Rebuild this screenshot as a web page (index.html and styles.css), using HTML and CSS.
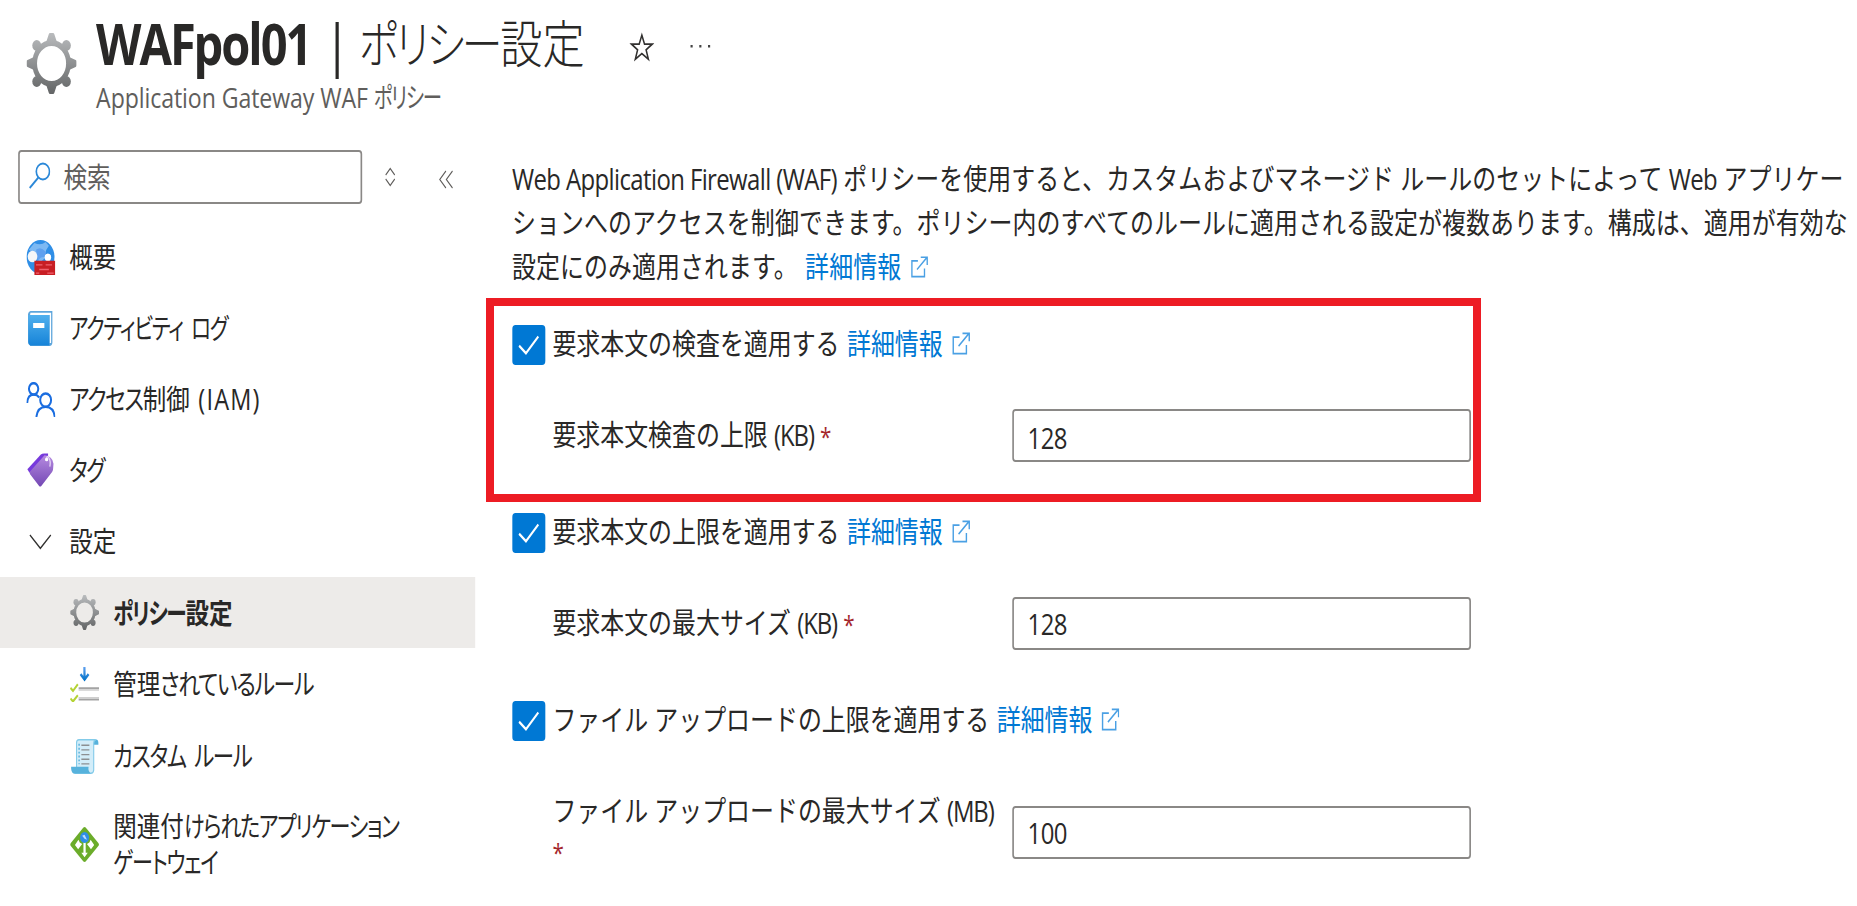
FILE: index.html
```html
<!DOCTYPE html>
<html lang="ja">
<head>
<meta charset="utf-8">
<title>WAFpol01 | ポリシー設定</title>
<link rel="stylesheet" href="styles.css">
</head>
<body>
<svg class="defs" width="0" height="0" aria-hidden="true">
  <defs>
    <linearGradient id="gGear" gradientUnits="userSpaceOnUse" x1="0" y1="0" x2="0" y2="18"><stop offset="0" stop-color="#b9bbbd"/><stop offset="1" stop-color="#636566"/></linearGradient>
    <linearGradient id="gBook" x1="0" y1="0" x2="0" y2="1"><stop offset="0" stop-color="#50b0ee"/><stop offset="1" stop-color="#1683d8"/></linearGradient>
    <linearGradient id="gTag" x1="0" y1="0" x2="0" y2="1"><stop offset="0" stop-color="#b58ae0"/><stop offset="1" stop-color="#7448b4"/></linearGradient>
    <linearGradient id="gArrow" gradientUnits="userSpaceOnUse" x1="0" y1="0" x2="0" y2="7"><stop offset="0" stop-color="#5ea0ef"/><stop offset="1" stop-color="#0071c8"/></linearGradient>
    <symbol id="gear" viewBox="0 0 18 18">
      <circle cx="9" cy="9" r="6.050" fill="none" stroke="url(#gGear)" stroke-width="1.700"/>
      <g fill="url(#gGear)">
        <path d="M7 2.900L8 .4Q8.100 0 8.500 0H9.500Q9.900 0 10 .4L11 2.900Q9 2.200 7 2.900zM7 15.100L8 17.600Q8.100 18 8.500 18H9.500Q9.900 18 10 17.600L11 15.100Q9 15.800 7 15.100zM2.900 7L.4 8Q0 8.100 0 8.500V9.500Q0 9.900 .4 10L2.900 11Q2.200 9 2.900 7zM15.100 7L17.600 8Q18 8.100 18 8.500V9.500Q18 9.900 17.600 10L15.100 11Q15.800 9 15.100 7z"/>
        <circle cx="3.700" cy="3.700" r="1.600"/><circle cx="14.300" cy="3.700" r="1.600"/><circle cx="3.700" cy="14.300" r="1.600"/><circle cx="14.300" cy="14.300" r="1.600"/>
      </g>
    </symbol>
    <symbol id="ext" viewBox="0 0 16 16">
      <path fill="none" stroke="#4aa0e4" stroke-width="1.200" d="M7 3.500H1.700V15H12.800V9M9.500 .9H15.200V6.500M15 1L6.200 9.800"/>
    </symbol>
    <symbol id="check" viewBox="0 0 16 16"><path fill="none" stroke="#fff" stroke-width=".95" d="M3.300 8.300L6.600 11.300L12.600 4.600"/></symbol>
  </defs>
</svg>
<div class="frame">
<div class="page">
  <header class="head">
    <svg class="head-icon"><use href="#gear"/></svg>
    <div class="head-text">
      <div class="title"><b class="t name">WAFpol01</b><span class="t bar">|</span><span class="t sub"><span class="k k-title">ポリシー</span>設定</span></div>
      <div class="kind"><span class="t">Application Gateway WAF <span class="k k-kind">ポリシー</span></span></div>
    </div>
    <svg class="star" viewBox="0 0 28 28"><path fill="none" stroke="#323130" stroke-width="1.700" d="M14 2.500L17 10.800H25.800L18.800 16.200L21.400 25L14 19.700L6.600 25L9.200 16.200L2.200 10.800H11Z"/></svg>
    <svg class="dots" viewBox="0 0 26 6"><path fill="#444" d="M1 2h2.600v2.400H1zM11.600 2h2.600v2.400h-2.600zM22.200 2h2.600v2.400h-2.600z"/></svg>
  </header>
  <div class="body">
    <nav class="side">
      <div class="tools">
        <div class="search">
          <svg class="lens" viewBox="0 0 26 27"><circle cx="17" cy="9.500" r="8" fill="none" stroke="#2b88d8" stroke-width="2"/><path d="M11.500 15.500L1 26" stroke="#2b88d8" stroke-width="2.200"/></svg>
          <span class="t find">検索</span>
        </div>
        <svg class="sort" viewBox="0 0 14 20"><path fill="none" stroke="#605e5c" stroke-width="1.200" d="M1.500 8L7 1.500L12.500 8M1.500 12L7 18.500L12.500 12"/></svg>
        <svg class="fold" viewBox="0 0 18 18"><path fill="none" stroke="#605e5c" stroke-width="1.200" d="M8.500 .5L1 9L8.500 17.500M16.500 .5L9 9L16.500 17.500"/></svg>
      </div>
      <div class="item">
        <svg class="ico" viewBox="0 0 18 18"><circle cx="8.800" cy="8.700" r="8.700" fill="#2f8ee6"/><path fill="#7db9f3" d="M5 1.500Q9 3 12 1L14 3Q11 6 12 9L8 12L6 7Q3 6 1.500 5Z"/><path fill="#5ea0ef" d="M6 5Q9 3 12 6L12 9Q9 8 7 11Z"/><circle cx="3.800" cy="8.500" r="3" fill="#f4f6f8"/><circle cx="13.400" cy="8.900" r="2" fill="#fff"/><path fill="#c81e24" d="M5 10.700H18V18H5z"/><path stroke="#f0616d" stroke-width=".7" d="M6 12.800h4M12 12.800h4M8 15.200h6M6 17h2M13 17h4"/></svg>
        <span class="t">概要</span>
      </div>
      <div class="item">
        <svg class="ico" viewBox="0 0 18 18"><path fill="#5ea6dc" d="M2.500 0H16.200V16.500Q16 18 14.800 18H2.500Q1 17.500 1 16V1.500Q1.300 .2 2.500 0z"/><path fill="#fff" d="M2.500 .9H15.400V16.500H14.500V2H2.300z"/><path fill="url(#gBook)" d="M1.200 2H14.300V17.800H2.500Q1.200 17.500 1.200 16z"/><path fill="#fff" d="M4.200 6.200h7v2.600h-7z"/></svg>
        <span class="t k k-log">アクティビティ ログ</span>
      </div>
      <div class="item">
        <svg class="ico" viewBox="0 0 18 18"><g fill="none" stroke="#1a6de0" stroke-width="1.250"><circle cx="4.500" cy="3.500" r="2.900"/><path d="M.5 10.800Q.8 6.500 4.500 6.500Q6.800 6.500 8 8"/><circle cx="12" cy="9.300" r="3.400"/><path d="M6.200 18Q7 12.800 12 12.800Q17 12.800 17.700 18"/></g></svg>
        <span class="t"><span class="k k-access">アクセス</span>制御 <span class="iam">(IAM)</span></span>
      </div>
      <div class="item">
        <svg class="ico" viewBox="0 0 18 18"><path fill="#773adc" d="M.6 8.300L9 .8Q9.800 .2 11 .2L13.500 .3V3L3.500 11Q1 9.500 .6 8.300z"/><path fill="url(#gTag)" d="M2 9.800L11.300 1.200Q16.200 1.500 16.900 5.500L16.600 8.500Q16.500 9.200 16 9.800L9.300 17Q8.500 17.600 7.800 16.800L2.200 10.800z"/><circle cx="12.600" cy="3.300" r="1" fill="#fff"/><path fill="none" stroke="#e6d8f5" stroke-width=".8" d="M12.400 2.500Q13.300 1.200 14 2.500Q15.300 4.200 14.600 7"/></svg>
        <span class="t k">タグ</span>
      </div>
      <div class="item">
        <svg class="ico" viewBox="0 0 18 18"><path fill="none" stroke="#323130" stroke-width=".8" d="M2.200 5.700L8.700 12.500L15.200 5.700"/></svg>
        <span class="t">設定</span>
      </div>
      <div class="item child on">
        <svg class="ico"><use href="#gear"/></svg>
        <span class="t"><span class="k k-policy">ポリシー</span>設定</span>
      </div>
      <div class="item child">
        <svg class="ico" viewBox="0 0 18 18"><path fill="none" stroke="url(#gArrow)" stroke-width="1.400" d="M8.900 0L9 6.300M6.500 3.700L9 6.400L11.500 3.700"/><path stroke="#a3a3a3" stroke-width="1.100" d="M5.300 10.900H18M5.300 16.700H18"/><path stroke="#cfcfcf" stroke-width=".8" d="M5.300 11.800H18M5.300 15.800H18"/><path fill="none" stroke="#b4d335" stroke-width="1.200" d="M.2 10.700L1.800 12.300L4.800 8.900M.2 16.200L1.800 17.700L4.800 14.500"/></svg>
        <span class="t">管理<span class="k k-rule">されているルール</span></span>
      </div>
      <div class="item child">
        <svg class="ico" viewBox="0 0 18 18"><path fill="#57b2dc" d="M15 .3H16.500Q17.800 .6 17.600 3H14.500z"/><path fill="#d3edf9" stroke="#83cbe9" stroke-width=".7" d="M4 14.500V2Q4 .4 5.500 .4H16Q14.700 .6 14.700 2.500V16Q14.500 17.600 13 17.600H3z"/><path fill="#57b2dc" d="M.6 14.300H11.500Q11 16.500 12.800 17.700H2Q.5 17 .6 14.300z"/><path stroke="#8c8f92" stroke-width=".7" d="M7 3.200h5M7 5.600h5M7 8h5M7 10.400h5M7 12.800h5"/><path stroke="#57b2dc" stroke-width=".9" stroke-dasharray="1 1" d="M5.600 2.500V13"/></svg>
        <span class="t k k-custom">カスタム ルール</span>
      </div>
      <div class="item child last">
        <svg class="ico" viewBox="0 0 18 18"><path fill="#6bac2a" d="M8.300 .3Q9 -.2 9.700 .3L17.700 8.300Q18.200 9 17.700 9.700L9.700 17.700Q9 18.200 8.300 17.700L.3 9.700Q-.2 9 .3 8.300z"/><path fill="#fff" d="M3 9.300L5.200 6.500L6 8L7.500 8.700L5 11.500zM15 9.300L12.800 6.500L12 8L10.500 8.700L13 11.500zM8.300 8H9.700V13.200H11L9 15.500L7 13.200H8.300z"/><circle cx="9" cy="5.400" r="2.800" fill="#2f8ee6"/><path fill="#bcdcff" d="M7.500 4.500L9 4L10.500 6.500L9 6z"/></svg>
        <span class="two"><span class="t">関連付<span class="k">けられたアプリケーション</span></span><span class="t k">ゲートウェイ</span></span>
      </div>
    </nav>
    <main class="main">
      <p class="para">
        <span class="row"><span class="t"><span class="en">Web Application Firewall (WAF)</span> ポリシーを使用すると、カスタムおよびマネージド ルールのセットによって <span class="en">Web</span> アプリケー</span></span>
        <span class="row"><span class="t">ションへのアクセスを制御できます。ポリシー内のすべてのルールに適用される設定が複数あります。構成は、適用が有効な</span></span>
        <span class="row"><span class="t">設定にのみ適用されます。</span><a class="t link far">詳細情報</a><svg class="ext small"><use href="#ext"/></svg></span>
      </p>
      <div class="check"><span class="box"><svg><use href="#check"/></svg></span><span class="t">要求本文の検査を適用する</span><a class="t link">詳細情報</a><svg class="ext"><use href="#ext"/></svg></div>
      <div class="field"><span class="label"><span class="t">要求本文検査の上限 <span class="en">(KB)</span> <i>*</i></span></span><div class="input low"><span class="t en">128</span></div></div>
      <div class="check second"><span class="box"><svg><use href="#check"/></svg></span><span class="t">要求本文の上限を適用する</span><a class="t link">詳細情報</a><svg class="ext"><use href="#ext"/></svg></div>
      <div class="field"><span class="label"><span class="t">要求本文の最大サイズ <span class="en">(KB)</span> <i>*</i></span></span><div class="input"><span class="t en">128</span></div></div>
      <div class="check second"><span class="box"><svg><use href="#check"/></svg></span><span class="t">ファイル アップロードの上限を適用する</span><a class="t link">詳細情報</a><svg class="ext"><use href="#ext"/></svg></div>
      <div class="field tall"><span class="label"><span class="t">ファイル アップロードの最大サイズ <span class="en">(MB)</span></span><br><i class="alone">*</i></span><div class="input"><span class="t en">100</span></div></div>
    </main>
  </div>
</div>
<div class="mark"></div>
</div>
</body>
</html>
```
FILE: styles.css
```css
* { box-sizing: border-box; }
html, body { margin: 0; padding: 0; }
body {
  background: #fff;
  color: #292827;
  font-family: "Open Sans", "Noto Sans CJK JP", sans-serif;
  font-size: 29px;
}
.defs { position: absolute; }
svg { display: block; flex: none; }
i { font-style: normal; font-size: 25px; color: #a4262c; }

.frame {
  position: relative;
  width: 100%;
  height: 906px;
  overflow: hidden;
}

/* The whole interface is condensed horizontally. */
.page {
  width: 2250px;
  height: 906px;
  transform: scaleX(.825);
  transform-origin: 0 0;
}
.t { white-space: nowrap; }

/* Narrow kana runs */
.k {
  display: inline-block;
  font-feature-settings: "palt";
  letter-spacing: -.06em;
  word-spacing: .2em;
  transform: scaleX(.895);
  transform-origin: 0 50%;
}
.k-title { transform: scaleX(.97); margin-right: -.1em; }
.k-kind { transform: scaleX(.84); }
.k-log { transform: scaleX(.875); }
.k-access { transform: scaleX(.92); margin-right: -.27em; }
.k-policy { transform: scaleX(.88); margin-right: -.42em; }
.k-rule { transform: scaleX(.93); }
.k-custom { transform: scaleX(.91); }
.en { letter-spacing: -.025em; }
.iam { letter-spacing: .05em; margin-left: 3px; }

.head { display: flex; height: 150px; padding-left: 31.500px; }
.head-icon { width: 61px; height: 61px; margin-top: 33px; }
.head-text { width: 612px; margin-left: 24px; padding-top: 9px; }
.title { display: flex; height: 68px; line-height: 68px; font-size: 57px; }
.name { letter-spacing: -.044em; }
.bar { margin: 0 11px 0 17px; }
.sub { font-size: 51px; font-weight: 300; }
.kind { height: 40px; line-height: 40px; font-size: 28px; letter-spacing: -.1px; color: #605e5c; }
.star { width: 30px; height: 31px; margin: 32px 0 0 34px; }
.dots { width: 26px; height: 6px; margin: 43px 0 0 43px; }

.body { display: flex; }
.side { width: 576px; font-size: 28.500px; }
.tools { display: flex; align-items: center; height: 54px; padding-left: 22px; margin-bottom: 17.500px; }
.search {
  display: flex;
  align-items: center;
  width: 417px;
  height: 54px;
  padding-left: 11px;
  border: 2px solid #8a8886;
  border-radius: 4px;
  color: #605e5c;
}
.lens { width: 26px; height: 27px; margin: 0 16px 3px 0; }
.find { padding-bottom: 3px; }
.sort { width: 14px; height: 20px; margin-left: 27px; }
.fold { width: 18px; height: 19px; margin-left: 52px; margin-top: 4px; }
.item {
  display: flex;
  align-items: center;
  height: 71.100px;
  padding-left: 31.500px;
  line-height: 36px;
}
.child { height: 72.200px; padding-left: 84.800px; }
.on { height: 71.100px; background: #edebe9; font-weight: 700; }
.ico { width: 35px; height: 35px; margin-right: 17.500px; }
.last { height: 104px; }
.two { display: flex; flex-direction: column; }

.main { flex: 1; padding: 6.500px 0 0 44.600px; }
.para { margin: 0 0 36.500px; letter-spacing: .1px; }
.row { display: flex; align-items: center; height: 44px; line-height: 44px; }
.link { margin-left: 9px; color: #0078d4; }
.far { margin-left: 9px; }
.ext { width: 23px; height: 23px; margin: 0 0 3px 10px; }
.small { width: 22px; height: 22px; margin: 0 0 0 11px; }
.check { display: flex; align-items: center; height: 40px; line-height: 38px; margin-bottom: 44px; }
.check .t { padding-bottom: 2px; }
.second { margin-top: 51px; }
.box { width: 40px; height: 40px; margin-right: 9px; border-radius: 4px; background: #0078d4; }
.box svg { width: 40px; height: 40px; }
.field { display: flex; align-items: center; height: 53px; padding-left: 49px; }
.label { width: 557px; line-height: 44px; }
.label .en { letter-spacing: -.045em; }
.alone { display: block; height: 44px; line-height: 38px; }
.tall { height: 88px; margin-top: 47.500px; }
.input {
  display: flex;
  align-items: center;
  width: 556px;
  height: 53px;
  padding-left: 17px;
  border: 2px solid #8a8886;
  border-radius: 4px;
}
.low { padding-top: 3px; }

/* Red annotation frame laid over the form. */
.mark {
  position: absolute;
  left: 486px;
  top: 298px;
  width: 995px;
  height: 204px;
  border: 8px solid #ed1c24;
}
```
